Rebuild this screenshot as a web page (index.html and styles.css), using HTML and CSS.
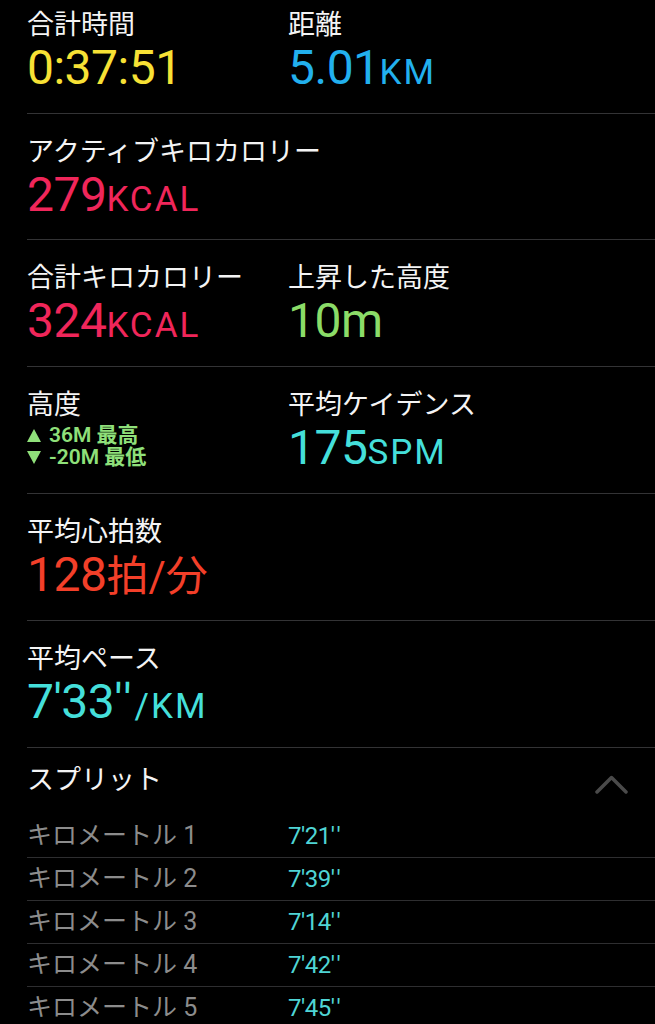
FILE: index.html
```html
<!DOCTYPE html>
<html lang="ja">
<head>
<meta charset="utf-8">
<title>ワークアウト</title>
<link rel="stylesheet" href="styles.css">
</head>
<body>
<main class="page">
  <section class="stat-row first">
    <div class="stat">
      <div class="label">合計時間</div>
      <div class="value yellow">0:37:51</div>
    </div>
    <div class="stat">
      <div class="label">距離</div>
      <div class="value blue">5.01<span class="unit">KM</span></div>
    </div>
  </section>

  <section class="stat-row second">
    <div class="stat">
      <div class="label">アクティブキロカロリー</div>
      <div class="value pink">279<span class="unit">KCAL</span></div>
    </div>
  </section>

  <section class="stat-row">
    <div class="stat">
      <div class="label">合計キロカロリー</div>
      <div class="value pink">324<span class="unit">KCAL</span></div>
    </div>
    <div class="stat">
      <div class="label">上昇した高度</div>
      <div class="value green">10m</div>
    </div>
  </section>

  <section class="stat-row">
    <div class="stat">
      <div class="label">高度</div>
      <div class="alt-lines">
        <div class="alt-line"><svg class="tri" viewBox="0 0 14 13" width="14" height="13"><path d="M7 0 L14 13 L0 13 Z"/></svg><span class="alt-text">36M 最高</span></div>
        <div class="alt-line"><svg class="tri" viewBox="0 0 14 13" width="14" height="13"><path d="M0 0 L14 0 L7 13 Z"/></svg><span class="alt-text">-20M 最低</span></div>
      </div>
    </div>
    <div class="stat">
      <div class="label">平均ケイデンス</div>
      <div class="value teal">175<span class="unit">SPM</span></div>
    </div>
  </section>

  <section class="stat-row">
    <div class="stat">
      <div class="label">平均心拍数</div>
      <div class="value red">128<span class="unit-cjk">拍/分</span></div>
    </div>
  </section>

  <section class="stat-row">
    <div class="stat">
      <div class="label">平均ペース</div>
      <div class="value teal">7'33<span class="ticks">''</span><span class="unit">/KM</span></div>
    </div>
  </section>

  <section class="splits">
    <div class="splits-head">
      <span class="splits-title">スプリット</span>
      <svg class="chevron" viewBox="0 0 33 19" width="33" height="19"><path d="M2 17 L16.5 2.5 L31 17"/></svg>
    </div>
    <div class="split-row"><span class="split-name">キロメートル 1</span><span class="split-time">7'21<span class="ticks">''</span></span></div>
    <div class="split-row"><span class="split-name">キロメートル 2</span><span class="split-time">7'39<span class="ticks">''</span></span></div>
    <div class="split-row"><span class="split-name">キロメートル 3</span><span class="split-time">7'14<span class="ticks">''</span></span></div>
    <div class="split-row"><span class="split-name">キロメートル 4</span><span class="split-time">7'42<span class="ticks">''</span></span></div>
    <div class="split-row"><span class="split-name">キロメートル 5</span><span class="split-time">7'45<span class="ticks">''</span></span></div>
  </section>
</main>
</body>
</html>
```

FILE: styles.css
```css
html, body {
  margin: 0;
  padding: 0;
  background: #000;
}

body {
  font-family: Roboto, "Noto Sans CJK JP", sans-serif;
  color: #fff;
  height: 1024px;
  overflow: hidden;
}

.page {
  margin-left: 27px;
}

.stat-row {
  display: grid;
  grid-template-columns: 261px 1fr;
  box-sizing: border-box;
  height: 127px;
  padding-top: 20px;
  border-bottom: 1px solid #333335;
}

.stat-row.first {
  height: 114px;
  padding-top: 7px;
}

.stat-row.second {
  height: 126px;
}

.label {
  font-family: "Noto Sans CJK JP", sans-serif;
  font-size: 27px;
  line-height: 32px;
  color: #f4f4f4;
  white-space: nowrap;
}

.value {
  margin-top: 9px;
  font-size: 48px;
  line-height: 40px;
  letter-spacing: -0.5px;
  white-space: nowrap;
}

.unit {
  font-size: 35px;
  letter-spacing: 2px;
}

.ticks {
  letter-spacing: 3px;
}

.unit-cjk {
  font-family: Roboto, "Noto Sans CJK JP", sans-serif;
  font-size: 42px;
  letter-spacing: 0;
}

.yellow { color: #f7e135; }
.blue { color: #22b0ee; }
.pink { color: #f0265a; }
.green { color: #8bdc68; }
.teal { color: #45dfda; }
.red { color: #f33f29; }

.alt-lines {
  margin-top: 5px;
  display: flex;
  flex-direction: column;
}

.alt-line {
  display: flex;
  align-items: center;
  gap: 8px;
  height: 22px;
  white-space: nowrap;
}

.alt-text {
  font-size: 21px;
  line-height: 22px;
  font-weight: 600;
  color: #8fe07a;
}

.tri {
  fill: #8fe07a;
  flex: none;
}

.splits-head {
  display: flex;
  justify-content: space-between;
  align-items: flex-start;
  box-sizing: border-box;
  height: 67px;
  padding-top: 14px;
}

.splits-title {
  font-family: "Noto Sans CJK JP", sans-serif;
  font-size: 27px;
  line-height: 32px;
  color: #f4f4f4;
}

.chevron {
  margin-top: 13px;
  margin-right: 27px;
  fill: none;
  stroke: #4a4a4a;
  stroke-width: 3.5;
  stroke-linecap: round;
  stroke-linejoin: round;
}

.split-row {
  display: grid;
  grid-template-columns: 261px 1fr;
  box-sizing: border-box;
  height: 43px;
  font-size: 24px;
  line-height: 42px;
  border-bottom: 1px solid #2e2e30;
  white-space: nowrap;
}

.split-name {
  color: #8c8c8c;
  font-size: 25px;
}

.split-time {
  color: #4fd5d5;
  letter-spacing: -0.5px;
}
```
